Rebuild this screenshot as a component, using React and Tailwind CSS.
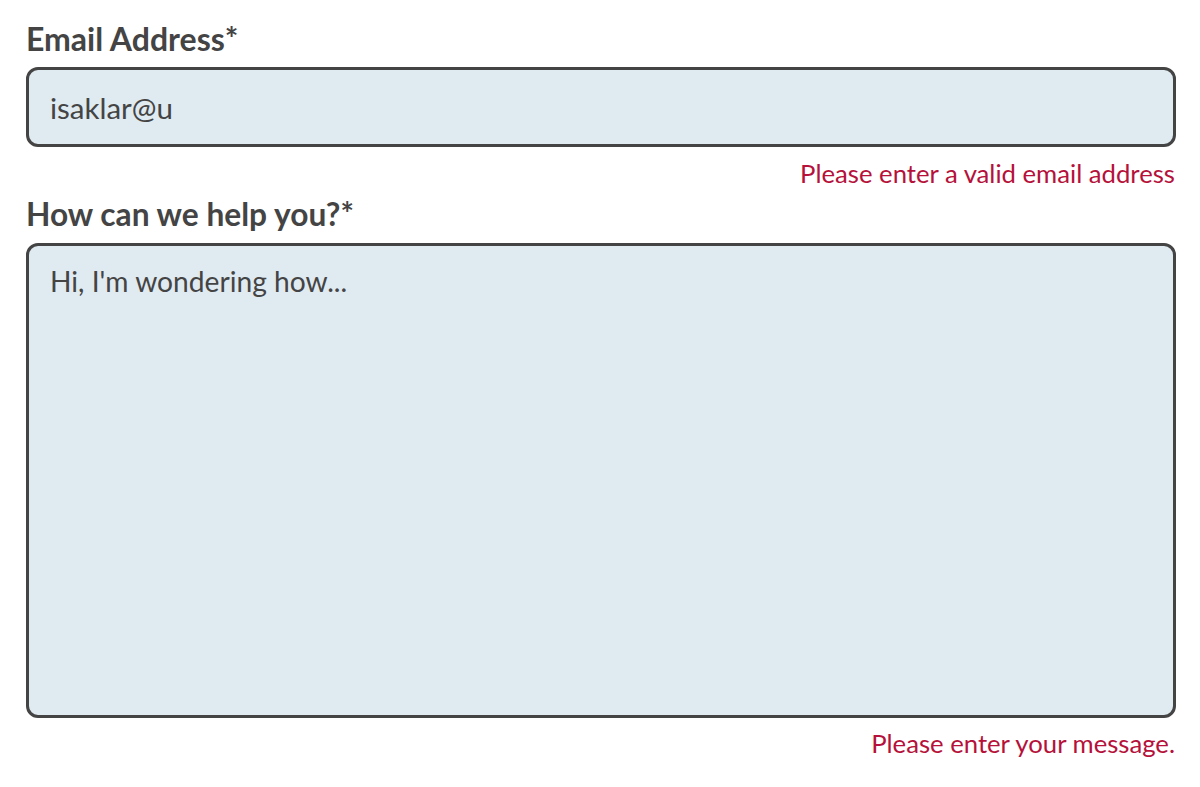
export default function App() {
  return (
    <div className="min-h-screen bg-white pl-[26px] pr-[24px] pt-[19px] font-['Lato',sans-serif] text-[#444]">
      <form className="flex flex-col" noValidate>
        <label htmlFor="email" className="text-[32px] font-bold leading-[40px]">
          Email Address*
        </label>
        <input
          id="email"
          type="email"
          defaultValue="isaklar@u"
          className="mt-[8px] h-[80px] w-full rounded-[12px] border-[3px] border-[#444] bg-[#e0eaf1] px-[21px] text-[29.5px] text-[#444] outline-none"
        />
        <p className="mt-[10px] pr-[1px] text-right text-[25.7px] leading-[32px] text-[#b5113a]">
          Please enter a valid email address
        </p>
        <label htmlFor="message" className="mt-[5px] text-[31.7px] font-bold leading-[40px]">
          How can we help you?*
        </label>
        <textarea
          id="message"
          placeholder="Hi, I'm wondering how..."
          className="mt-[9px] h-[475px] w-full resize-none rounded-[12px] border-[3px] border-[#444] bg-[#e0eaf1] px-[21px] pt-[18px] text-[28.2px] leading-[34px] text-[#444] outline-none placeholder:text-[#444]"
        />
        <p className="mt-[9px] pr-[1px] text-right text-[25.7px] leading-[32px] text-[#b5113a]">
          Please enter your message.
        </p>
      </form>
    </div>
  );
}
